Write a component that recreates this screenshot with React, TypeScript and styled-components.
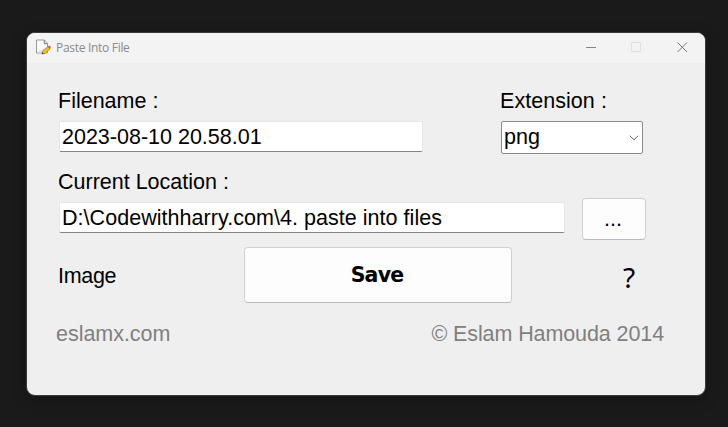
import React from 'react';
import styled, { createGlobalStyle } from 'styled-components';

const GlobalStyle = createGlobalStyle`
  *, *::before, *::after { box-sizing: border-box; }
  html, body { margin: 0; background: #1a1a1a; overflow: hidden; }
`;

const Desktop = styled.div`
  width: 728px;
  height: 427px;
  padding: 32px 22px 31px 26px;
  background: #1a1a1a;
  font-family: 'Liberation Sans', Arial, sans-serif;
`;

const Dialog = styled.main`
  width: 680px;
  height: 364px;
  border: 1px solid #3b3b3b;
  border-radius: 9px;
  background: #efefef;
  overflow: hidden;
  box-shadow: 0 4px 16px rgba(0, 0, 0, 0.22);
`;

const TitleBar = styled.header`
  display: flex;
  height: 30px;
  padding-left: 8px;
  background: #f3f3f3;
`;

const AppIcon = styled.svg`
  width: 17px;
  height: 17px;
  margin-top: 6px;
`;

const Title = styled.h1<{ $spacing: number }>`
  flex: 1;
  margin: 0 0 0 4px;
  font: 400 12px/29px 'Open Sans', 'Noto Sans', sans-serif;
  letter-spacing: ${(p) => p.$spacing}px;
  color: #8b8b8b;
`;

const WindowControls = styled.div`
  display: flex;
  width: 136px;
`;

const ControlButton = styled.button<{ $color: string }>`
  display: flex;
  width: 45.5px;
  height: 28px;
  padding: 0;
  border: 0;
  background: none;
  align-items: center;
  justify-content: center;
  color: ${(p) => p.$color};
`;

const Form = styled.form`
  padding: 26px 0 0 29px;
`;

const Row = styled.div<{ $height: number }>`
  display: flex;
  align-items: flex-start;
  height: ${(p) => p.$height}px;
`;

const Field = styled.div<{ $width: number }>`
  display: flex;
  flex-direction: column;
  width: ${(p) => p.$width}px;
`;

const Label = styled.label<{ $spacing?: number }>`
  height: 32px;
  padding-left: 2px;
  font-size: 21.5px;
  line-height: 24px;
  letter-spacing: ${(p) => p.$spacing ?? 0}px;
  color: #000;
  white-space: pre;
`;

const TextInput = styled.input<{ $width: number; $spacing: number }>`
  width: ${(p) => p.$width}px;
  height: 31px;
  margin: 0 0 0 3px;
  padding: 2px 2px 0;
  border: 1px solid #e6e6e6;
  border-bottom-color: #858585;
  border-radius: 2px;
  outline: 0;
  background: #fff;
  font: 21.5px 'Liberation Sans', Arial, sans-serif;
  letter-spacing: ${(p) => p.$spacing}px;
  color: #000;
`;

const Combo = styled.button`
  display: flex;
  width: 142px;
  height: 33px;
  margin-left: 3px;
  padding: 0 3px 0 2px;
  border: 1px solid #8b8b8b;
  border-radius: 2px;
  background: #fff;
  align-items: center;
  justify-content: space-between;
  font: 21.5px 'Liberation Sans', Arial, sans-serif;
  color: #000;
`;

const PushButton = styled.button`
  padding: 0;
  border: 1px solid #d0d0d0;
  border-bottom-color: #bababa;
  border-radius: 4px;
  background: #fdfdfd;
  color: #000;
`;

const BrowseButton = styled(PushButton)`
  width: 64px;
  height: 42px;
  margin: 28px 0 0 17px;
  padding: 0 2px 0 0;
  font: 21.5px 'Liberation Sans', Arial, sans-serif;
`;

const SaveButton = styled(PushButton)`
  width: 268px;
  height: 56px;
  padding-right: 2px;
  font: bold 20.5px 'DejaVu Sans', sans-serif;
  letter-spacing: -0.8px;
`;

const ContentKind = styled.span`
  width: 188px;
  padding: 17px 0 0 2px;
  font-size: 21.5px;
  line-height: 24px;
  letter-spacing: -0.3px;
`;

const HelpLink = styled.a`
  margin-left: 111px;
  padding-top: 14px;
  font: 28px/32px 'Noto Sans', sans-serif;
  color: #000;
`;

const Footer = styled.footer`
  display: flex;
  width: 608px;
  justify-content: space-between;
  font-size: 21.5px;
  line-height: 24px;
  color: #808080;
`;

const FooterText = styled.span<{ $spacing: number }>`
  letter-spacing: ${(p) => p.$spacing}px;
`;

function PageIcon() {
  return (
    <AppIcon viewBox="0 0 17 17">
      <path d="M1.5 1h8l3 3.4v9.6h-11z" fill="#fafafa" stroke="#9a9a9a" />
      <path d="M2 13.5h10V8z" fill="#ddd" />
      <path d="M9.2 1v3.7h3.5" fill="#e2e2e2" stroke="#7c7c7c" />
      <path d="M7.7 12.1l5.2-4.5 2.2 2.4-5.2 4.5-3 .6z" fill="#f1be22" stroke="#a87719" strokeWidth=".6" />
      <path d="M12.9 7.6l1-.8q1.3-.2 1.9 1.3l-.8 1.9z" fill="#bc5278" />
      <path d="M6.9 15.1l.5-1.8 1.5 1.5z" fill="#46351a" />
    </AppIcon>
  );
}

export default function App() {
  return (
    <>
      <GlobalStyle />
      <Desktop>
        <Dialog>
          <TitleBar>
            <PageIcon />
            <Title $spacing={-0.3}>Paste Into File</Title>
            <WindowControls>
              <ControlButton $color="#858585" aria-label="Minimize">
                <svg width="11" height="11"><path d="M0 5.5h10" stroke="currentColor" /></svg>
              </ControlButton>
              <ControlButton $color="#dedede" aria-label="Maximize" disabled>
                <svg width="11" height="11"><rect x=".5" y=".5" width="9" height="9" rx=".5" fill="none" stroke="currentColor" /></svg>
              </ControlButton>
              <ControlButton $color="#777" aria-label="Close">
                <svg width="11" height="11"><path d="M.5 .5l9.5 9.5M10 .5L.5 10" stroke="currentColor" /></svg>
              </ControlButton>
            </WindowControls>
          </TitleBar>
          <Form onSubmit={(e) => e.preventDefault()}>
            <Row $height={81}>
              <Field $width={442}>
                <Label htmlFor="filename">Filename :</Label>
                <TextInput id="filename" $width={364} $spacing={0} defaultValue="2023-08-10 20.58.01" />
              </Field>
              <Field $width={148}>
                <Label $spacing={0.05}>Extension :</Label>
                <Combo type="button">
                  <span>png</span>
                  <svg width="10" height="6"><path d="M.8 .8L5 4.8 9.2 .8" fill="none" stroke="#666" /></svg>
                </Combo>
              </Field>
            </Row>
            <Row $height={77}>
              <Field $width={509}>
                <Label htmlFor="location">Current Location :</Label>
                <TextInput id="location" $width={506} $spacing={0.04} defaultValue="D:\Codewithharry.com\4. paste into files" />
              </Field>
              <BrowseButton type="button">...</BrowseButton>
            </Row>
            <Row $height={75}>
              <ContentKind>Image</ContentKind>
              <SaveButton type="submit">Save</SaveButton>
              <HelpLink>?</HelpLink>
            </Row>
            <Footer>
              <FooterText $spacing={-0.03}>eslamx.com</FooterText>
              <FooterText $spacing={-0.1}>© Eslam Hamouda 2014</FooterText>
            </Footer>
          </Form>
        </Dialog>
      </Desktop>
    </>
  );
}
